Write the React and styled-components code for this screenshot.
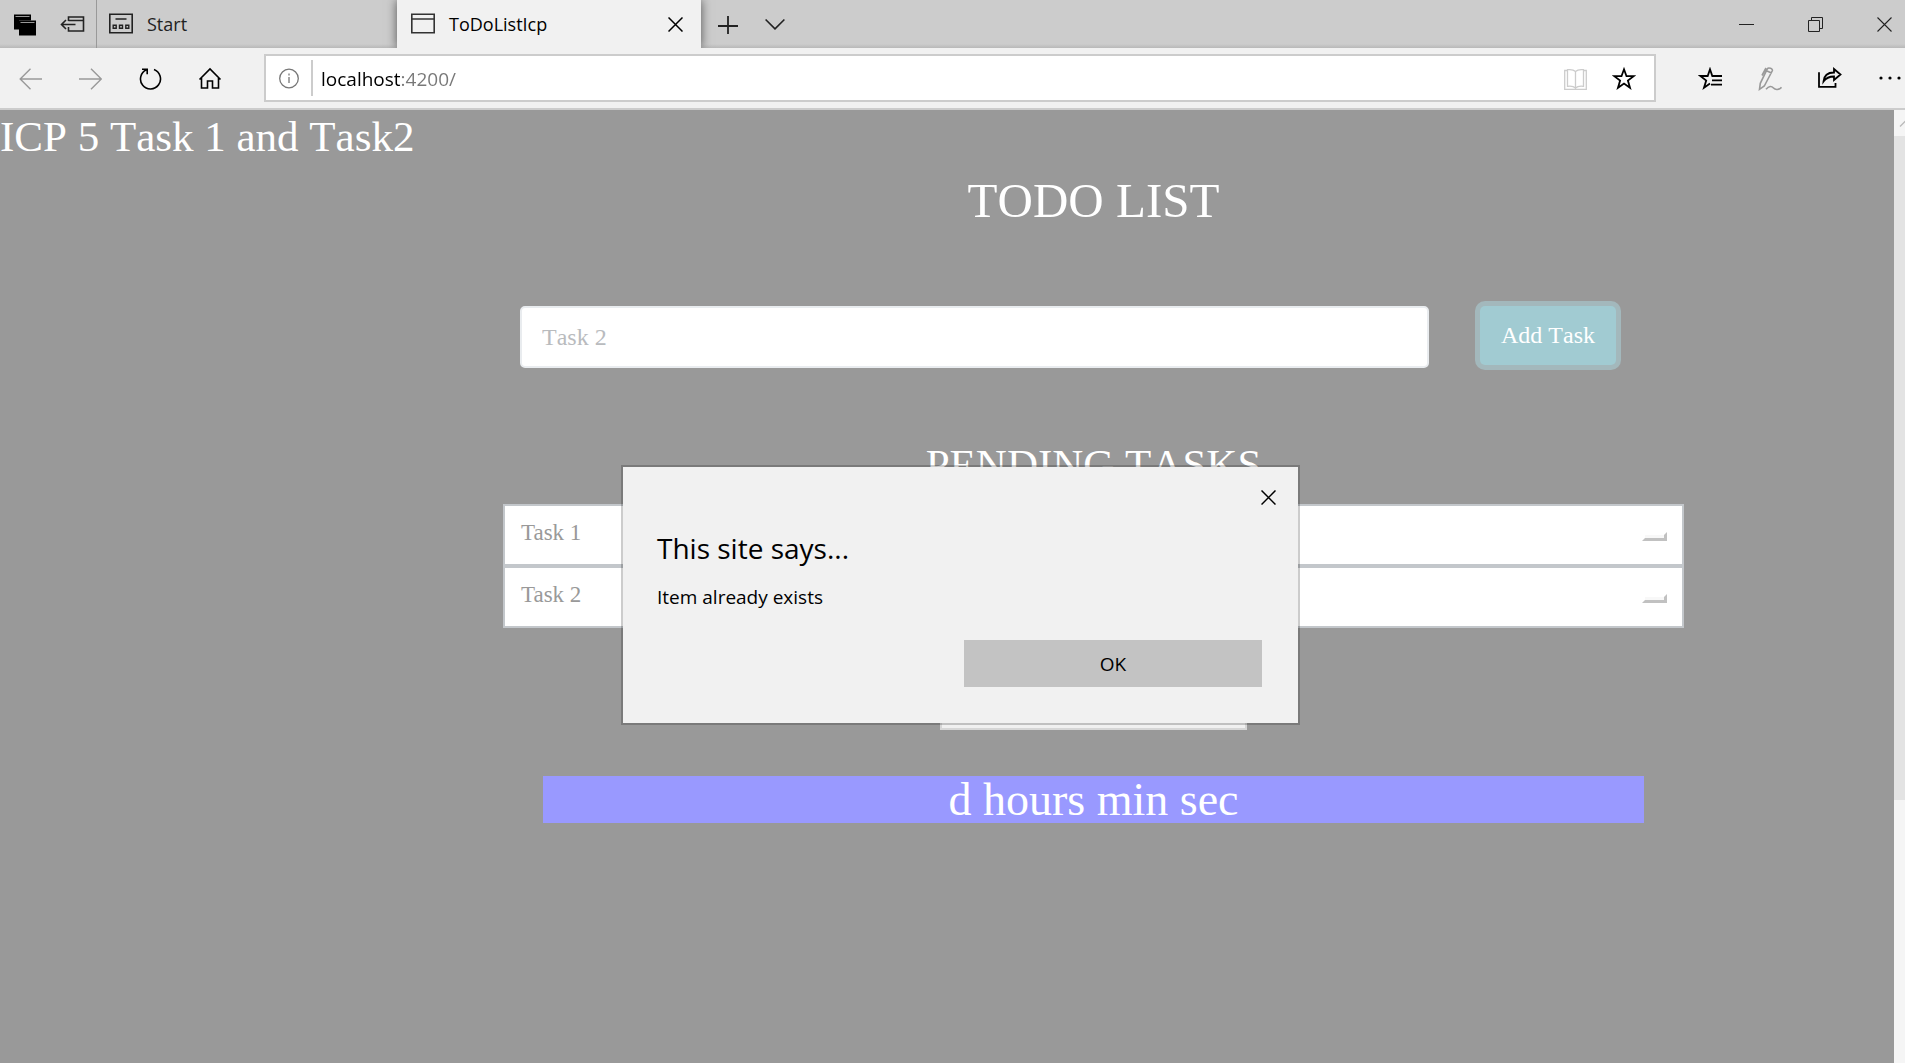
import React from "react";
import styled, { createGlobalStyle, css } from "styled-components";

const uiFont = '"Open Sans", "Noto Sans", sans-serif';
const pageFont = '"Liberation Serif", "Times New Roman", serif';

const GlobalStyle = createGlobalStyle`
  * { box-sizing: border-box; }
  body { margin: 0; background: #999; font-family: ${pageFont}; }
  h1, h2, h3, p, ul { margin: 0; padding: 0; font-weight: 400; }
  button, input { font: inherit; margin: 0; }
  button { background: none; border: 0; padding: 0; color: inherit; }
  svg { display: block; flex: none; }
`;

const Window = styled.div`
  position: relative;
  display: flex;
  flex-direction: column;
  min-height: 100vh;
  overflow: hidden;
`;

/* Tab strip */

const TabStrip = styled.header`
  display: flex;
  height: 48px;
  overflow: hidden;
  background: linear-gradient(#ccc 0, #ccc 44px, #b8b8b8 48px);
  font-family: ${uiFont};
  font-size: 18px;
  color: #222;
`;

const StripTools = styled.div`
  display: flex;
  align-items: center;
  width: 97px;
  padding-left: 12px;
  gap: 22px;
  border-right: 1px solid #999;
`;

const Tab = styled.div`
  display: flex;
  align-items: center;
  justify-content: space-between;
  width: ${(p) => (p.$active ? 304 : 300)}px;
  padding: 0 18px 0 12px;
  ${(p) =>
    p.$active &&
    css`
      padding-left: 14px;
      background: #f1f1f1;
      color: #000;
      box-shadow: 0 0 10px rgba(0, 0, 0, 0.6);
    `}
`;

const TabLabel = styled.button`
  display: flex;
  align-items: center;
  gap: 14px;
  height: 48px;
`;

const StripButton = styled.button`
  display: flex;
  align-items: center;
  justify-content: center;
  width: 47px;
  &:first-of-type { margin-left: 3px; }
`;

const WindowButtons = styled.div`
  display: flex;
  margin-left: auto;
`;

const WindowButton = styled.button`
  padding: 0 27px;
  &:last-child { padding-right: 13px; }
`;

/* Toolbar */

const Toolbar = styled.nav`
  display: flex;
  align-items: center;
  height: 62px;
  background: #f1f1f1;
  border-bottom: 2px solid #ccc;
`;

const ToolButton = styled.button`
  padding: 19px 18px 17px;
  color: ${(p) => (p.disabled ? "#999" : "#000")};
  &:last-child { padding-right: 3px; }
`;

const AddressBar = styled.div`
  display: flex;
  flex: 1;
  align-items: center;
  height: 48px;
  margin: 0 24px;
  padding: 0 18px 0 12px;
  background: #fff;
  border: 2px solid #ccc;
`;

const AddressInput = styled.input`
  flex: 1;
  min-width: 0;
  height: 36px;
  margin-left: 9px;
  padding: 2px 0 0 8px;
  border: 0;
  border-left: 2px solid #ccc;
  outline: 0;
  font-family: ${uiFont};
  font-size: 19px;
  color: transparent;
  background: linear-gradient(90deg, #000 87px, #777 87px) text;
  border-image: linear-gradient(#ccc, #ccc) 1;
`;

const AddressButton = styled.button`
  margin-left: 24px;
`;

/* Web page */

const Viewport = styled.div`
  display: flex;
  flex: 1;
`;

const Page = styled.main`
  flex: 1;
  background: #999;
  color: #fff;
  font-kerning: none;
`;

const PageTitle = styled.h1`
  font-size: 43px;
  line-height: 54px;
`;

const Column = styled.section`
  margin: 6px 210px 0 503px;
`;

const ListTitle = styled.h2`
  font-size: 49px;
  line-height: 62px;
  text-align: center;
`;

const TaskForm = styled.form`
  display: flex;
  gap: 51px;
  margin-top: 74px;
  padding: 0 68px 0 17px;
  font-size: 24px;
`;

const TaskInput = styled.input`
  flex: 1;
  min-width: 0;
  height: 62px;
  padding: 0 20px;
  border: 2px solid #e9ecef;
  border-radius: 5px;
  outline: 0;
  color: #b9bbbe;
  font-kerning: none;
`;

const AddButton = styled.button`
  width: 136px;
  height: 59px;
  border-radius: 5px;
  background: #a1cbd2;
  color: #fff;
  box-shadow: 0 0 0 5px #a3b8bc;
  font-kerning: none;
`;

const PendingTitle = styled.h3`
  margin-top: 71px;
  font-size: 43px;
  line-height: 52px;
  text-align: center;
`;

const TaskList = styled.ul`
  margin-top: 13px;
  list-style: none;
`;

const TaskRow = styled.li`
  display: flex;
  align-items: center;
  justify-content: space-between;
  height: 62px;
  padding: 0 15px 4px 16px;
  background: #fff;
  border: 2px solid #c3c7cb;
  font-size: 23px;
  font-kerning: normal;
  color: #999;
`;

const DoneButton = styled.button`
  width: 25px;
  height: 9px;
  margin-top: 6px;
  background: #f8f8f8;
  border: 3px solid #c1c1c1;
  border-top-color: #fff;
  border-left-color: #fff;
`;

const DueInput = styled.input`
  display: block;
  width: 307px;
  height: 48px;
  margin: 54px auto 0;
  border: 2px solid #d6d6d6;
  background: #f0f0f0;
`;

const Countdown = styled.p`
  margin: 46px 40px 0;
  background: #99f;
  font-size: 46px;
  line-height: 47px;
  text-align: center;
`;

const ScrollTrack = styled.div`
  display: flex;
  flex-direction: column;
  width: 11px;
  overflow: hidden;
  background: #f5f5f5;
`;

const ScrollThumb = styled.div`
  height: 664px;
  background: #e3e3e3;
`;

/* Alert */

const Overlay = styled.div`
  position: absolute;
  inset: 110px 0 0 0;
  display: flex;
  align-items: center;
  justify-content: center;
  padding: 17px 0 0 16px;
`;

const Dialog = styled.div`
  width: 679px;
  padding: 17px 36px 36px 34px;
  background: #f1f1f1;
  background-clip: padding-box;
  border: 2px solid rgba(0, 0, 0, 0.2);
  color: #000;
  font-family: ${uiFont};
  font-size: 19px;
  display: flex;
  flex-direction: column;
`;

const DialogClose = styled.button`
  align-self: flex-end;
  padding: 6px;
  margin-right: -20px;
`;

const DialogTitle = styled.h2`
  margin-top: 18px;
  font-size: 28px;
  line-height: 38px;
`;

const DialogText = styled.p`
  margin-top: 17px;
  line-height: 26px;
`;

const OkButton = styled.button`
  align-self: flex-end;
  width: 298px;
  height: 47px;
  margin-top: 30px;
  background: #c3c3c3;
`;

/* Icons */

const Icon = ({ w = 24, h = 24, sw = 2, children }) => (
  <svg
    width={w}
    height={h}
    viewBox={`0 0 ${w} ${h}`}
    fill="none"
    stroke="currentColor"
    strokeWidth={sw}
    aria-hidden="true"
  >
    {children}
  </svg>
);

const CrossIcon = ({ sw = 1.5 }) => (
  <Icon w={15} h={15} sw={sw}>
    <path d="M.5 .5l14 14M14.5 .5l-14 14" />
  </Icon>
);

export default function App() {
  return (
    <Window>
      <GlobalStyle />
      <TabStrip>
        <StripTools>
          <button aria-label="Tabs you've set aside">
            <Icon w={26}>
              <path d="M2 2.500h17v6h-12v9h-5z" fill="#000" stroke="none" />
              <path d="M7 8.500h17v15h-17z" fill="#000" stroke="none" />
              <path d="M3.500 4.500h14M8.500 10.500h14" stroke="#999" strokeWidth="1.200" />
            </Icon>
          </button>
          <button aria-label="Set these tabs aside">
            <Icon w={26} sw={1.600}>
              <path d="M8.500 9V5h15v14h-15v-4M8.500 8.500h15M1.500 12.500h14M6 8l-4.500 4.500L6 17" />
            </Icon>
          </button>
        </StripTools>
        <Tab>
          <TabLabel>
            <Icon sw={1.600}>
              <path d="M.8 2.300h22.400v18.500H.8zM6.500 7h11" />
              <path d="M4.200 13.300h3v3h-3zM10.500 13.300h3v3h-3zM16.800 13.300h3v3h-3z" strokeWidth="1.4" />
            </Icon>
            Start
          </TabLabel>
        </Tab>
        <Tab $active>
          <TabLabel>
            <Icon sw={1.600}>
              <path d="M.8 2.300h22.400v18.500H.8zM.8 7h22.400" stroke="#333" />
            </Icon>
            ToDoListIcp
          </TabLabel>
          <button aria-label="Close tab">
            <CrossIcon />
          </button>
        </Tab>
        <StripButton aria-label="New tab">
          <Icon w={20} h={20} sw={1.800}>
            <path d="M10 2v20M0 12h20" />
          </Icon>
        </StripButton>
        <StripButton aria-label="Show tab previews">
          <Icon w={20} h={12} sw={1.600}>
            <path d="M.6 1.500l9.400 9.400 9.400-9.400" />
          </Icon>
        </StripButton>
        <WindowButtons>
          <WindowButton aria-label="Minimize">
            <Icon w={15} h={15} sw={1}>
              <path d="M0 7.500h15" />
            </Icon>
          </WindowButton>
          <WindowButton aria-label="Restore">
            <Icon w={15} h={15} sw={1}>
              <path d="M.5 3.500h11v11H.5zM3.500 3.500v-3h11v11h-3" />
            </Icon>
          </WindowButton>
          <WindowButton aria-label="Close window">
            <CrossIcon sw={1.100} />
          </WindowButton>
        </WindowButtons>
      </TabStrip>

      <Toolbar>
        <ToolButton aria-label="Back" disabled>
          <Icon sw={1.400}>
            <path d="M24 12H2.500M12.500 1.700L2.200 12l10.300 10.300" />
          </Icon>
        </ToolButton>
        <ToolButton aria-label="Forward" disabled>
          <Icon sw={1.400}>
            <path d="M1 12h22M13 1.700L23.300 12 13 22.300" />
          </Icon>
        </ToolButton>
        <ToolButton aria-label="Refresh">
          <Icon sw={1.600}>
            <path d="M16 2.600a10 10 0 1 1-7.500 .2M4 2.200h5.200v5" />
          </Icon>
        </ToolButton>
        <ToolButton aria-label="Home">
          <Icon sw={1.600}>
            <path d="M1.500 12.500L12 2l10.500 10.500M3.500 10.800v10.200h6v-7h5v7h6V10.800" />
          </Icon>
        </ToolButton>
        <AddressBar>
          <Icon sw={1.300}>
            <g stroke="#777">
              <circle cx="11" cy="12.500" r="9.300" />
              <path d="M11 11v6M11 7.500v2" />
            </g>
          </Icon>
          <AddressInput aria-label="Address" defaultValue="localhost:4200/" />
          <AddressButton aria-label="Reading view" disabled>
            <Icon sw={1.300}>
              <path
                stroke="#ccc"
                d="M3 4.500H.7v19h21.600v-19H20M11.500 5.500c-2-2-5-2.200-8-1.800v16.600c3-.4 6-.2 8 1.700 2-1.900 5-2.100 8-1.700V3.700c-3-.4-6-.2-8 1.800v18"
              />
            </Icon>
          </AddressButton>
          <AddressButton aria-label="Add to favorites">
            <Icon sw={1.800}>
              <path d="M12 3.300l2.500 6.900h7.200l-5.800 4.400 2.100 7.200L12 17.500l-6 4.300 2.100-7.200-5.800-4.400h7.200z" />
            </Icon>
          </AddressButton>
        </AddressBar>
        <ToolButton aria-label="Favorites hub">
          <Icon sw={1.800}>
            <path d="M24 9H14.300L12 2.300 9.700 9H2.300l5.900 4.600L6 20.800l6-4.300M14 13.300h10M13 17.700h11" />
          </Icon>
        </ToolButton>
        <ToolButton aria-label="Add notes" disabled>
          <Icon sw={1.600}>
            <path d="M1.500 22.300l.8-6L9.300 1.800c1-1.700 5.800-.3 5 2L6.300 19zM13.500 6L9 4M8 1L4 8.500M8 22.300c3-3.500 5.500-3.500 7.500-1.200 2 2.200 5.500 1.800 8-.8" />
          </Icon>
        </ToolButton>
        <ToolButton aria-label="Share">
          <Icon sw={1.800}>
            <path d="M1 5.300v14.500h16.500V16M5.500 14.500C6 9 9.500 5.500 16 5.500V2l6.500 5.500L16 13V9.500C11 9.500 8 11 5.500 14.500z" />
          </Icon>
        </ToolButton>
        <ToolButton aria-label="Settings and more">
          <Icon>
            <g fill="currentColor" stroke="none">
              <circle cx="3" cy="11" r="1.600" />
              <circle cx="12" cy="11" r="1.600" />
              <circle cx="21" cy="11" r="1.600" />
            </g>
          </Icon>
        </ToolButton>
      </Toolbar>

      <Viewport>
        <Page>
          <PageTitle>ICP 5 Task 1 and Task2</PageTitle>
          <Column>
            <ListTitle>TODO LIST</ListTitle>
            <TaskForm onSubmit={(e) => e.preventDefault()}>
              <TaskInput aria-label="New task" defaultValue="Task 2" />
              <AddButton type="submit">Add Task</AddButton>
            </TaskForm>
            <PendingTitle>PENDING TASKS</PendingTitle>
            <TaskList>
              {["Task 1", "Task 2"].map((task) => (
                <TaskRow key={task}>
                  {task}
                  <DoneButton aria-label={`Complete ${task}`} />
                </TaskRow>
              ))}
            </TaskList>
            <DueInput aria-label="Due date" />
            <Countdown>d hours min sec</Countdown>
          </Column>
        </Page>
        <ScrollTrack>
          <Icon w={26} h={26} sw={1.400}>
            <path d="M6 16.500l7-7 7 7" stroke="#bbb" />
          </Icon>
          <ScrollThumb />
        </ScrollTrack>
      </Viewport>

      <Overlay>
        <Dialog role="alertdialog" aria-labelledby="alert-title" aria-describedby="alert-text">
          <DialogClose aria-label="Close">
            <CrossIcon />
          </DialogClose>
          <DialogTitle id="alert-title">This site says...</DialogTitle>
          <DialogText id="alert-text">Item already exists</DialogText>
          <OkButton>OK</OkButton>
        </Dialog>
      </Overlay>
    </Window>
  );
}
